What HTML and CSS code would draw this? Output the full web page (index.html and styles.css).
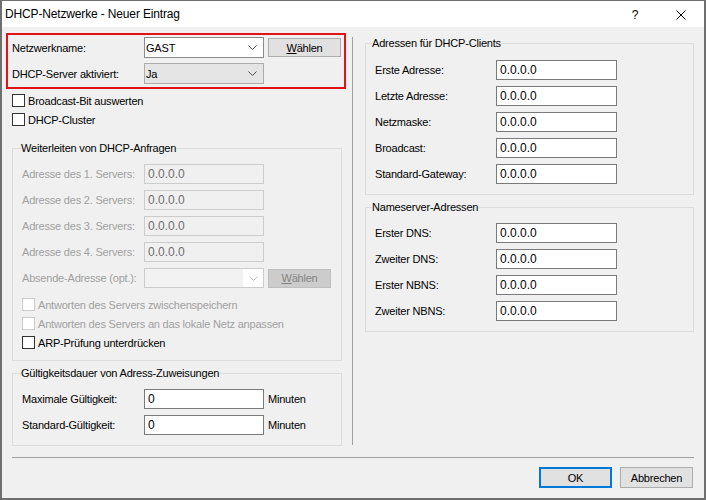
FILE: index.html
```html
<!DOCTYPE html>
<html lang="de">
<head>
<meta charset="utf-8">
<title>DHCP-Netzwerke - Neuer Eintrag</title>
<link rel="stylesheet" href="styles.css">
</head>
<body>
<div class="window">
  <div class="titlebar">
    <span class="title">DHCP-Netzwerke - Neuer Eintrag</span>
    <div class="caption-buttons">
      <span class="cap-btn help">?</span>
      <span class="cap-btn close"><svg width="10" height="10" viewBox="0 0 10 10"><path d="M0.5 0.5 L9.5 9.5 M9.5 0.5 L0.5 9.5" stroke="#000" stroke-width="1" fill="none"/></svg></span>
    </div>
  </div>
  <div class="client">
    <div class="main">
      <div class="col-left">
        <div class="highlight">
          <span class="lbl">Netzwerkname:</span>
          <div class="combo edit"><span class="val">GAST</span><svg class="chev" width="9" height="5" viewBox="0 0 9 5"><path d="M0.5 0.5 L4.5 4.5 L8.5 0.5" fill="none" stroke="currentColor"/></svg></div>
          <span class="btn"><u>W</u>ählen</span>
          <span class="lbl">DHCP-Server aktiviert:</span>
          <div class="combo list"><span class="val">Ja</span><svg class="chev" width="9" height="5" viewBox="0 0 9 5"><path d="M0.5 0.5 L4.5 4.5 L8.5 0.5" fill="none" stroke="currentColor"/></svg></div>
        </div>
        <div class="checks top-checks">
          <div class="check"><span class="box"></span>Broadcast-Bit auswerten</div>
          <div class="check"><span class="box"></span>DHCP-Cluster</div>
        </div>
        <fieldset class="group group-relay">
          <legend>Weiterleiten von DHCP-Anfragen</legend>
          <div class="form form-left">
            <span class="lbl dis">Adresse des 1. Servers:</span><span class="field dis">0.0.0.0</span>
            <span class="lbl dis">Adresse des 2. Servers:</span><span class="field dis">0.0.0.0</span>
            <span class="lbl dis">Adresse des 3. Servers:</span><span class="field dis">0.0.0.0</span>
            <span class="lbl dis">Adresse des 4. Servers:</span><span class="field dis">0.0.0.0</span>
            <span class="lbl dis">Absende-Adresse (opt.):</span>
            <div class="combo dis"><span class="combo-text"></span><span class="combo-arrow"><svg class="chev" width="9" height="5" viewBox="0 0 9 5"><path d="M0.5 0.5 L4.5 4.5 L8.5 0.5" fill="none" stroke="currentColor"/></svg></span></div>
            <span class="btn dis"><u>W</u>ählen</span>
          </div>
          <div class="checks">
            <div class="check dis"><span class="box"></span>Antworten des Servers zwischenspeichern</div>
            <div class="check dis"><span class="box"></span>Antworten des Servers an das lokale Netz anpassen</div>
            <div class="check"><span class="box"></span>ARP-Prüfung unterdrücken</div>
          </div>
        </fieldset>
        <fieldset class="group group-lease">
          <legend>Gültigkeitsdauer von Adress-Zuweisungen</legend>
          <div class="form form-left">
            <span class="lbl">Maximale Gültigkeit:</span><span class="field">0</span><span class="unit">Minuten</span>
            <span class="lbl">Standard-Gültigkeit:</span><span class="field">0</span><span class="unit">Minuten</span>
          </div>
        </fieldset>
      </div>
      <div class="vsep"></div>
      <div class="col-right">
        <fieldset class="group group-clients">
          <legend>Adressen für DHCP-Clients</legend>
          <div class="form form-right">
            <span class="lbl">Erste Adresse:</span><span class="field">0.0.0.0</span>
            <span class="lbl">Letzte Adresse:</span><span class="field">0.0.0.0</span>
            <span class="lbl">Netzmaske:</span><span class="field">0.0.0.0</span>
            <span class="lbl">Broadcast:</span><span class="field">0.0.0.0</span>
            <span class="lbl">Standard-Gateway:</span><span class="field">0.0.0.0</span>
          </div>
        </fieldset>
        <fieldset class="group group-ns">
          <legend>Nameserver-Adressen</legend>
          <div class="form form-right">
            <span class="lbl">Erster DNS:</span><span class="field">0.0.0.0</span>
            <span class="lbl">Zweiter DNS:</span><span class="field">0.0.0.0</span>
            <span class="lbl">Erster NBNS:</span><span class="field">0.0.0.0</span>
            <span class="lbl">Zweiter NBNS:</span><span class="field">0.0.0.0</span>
          </div>
        </fieldset>
      </div>
    </div>
    <div class="hsep"></div>
    <div class="footer">
      <span class="dlg-btn default">OK</span>
      <span class="dlg-btn">Abbrechen</span>
    </div>
  </div>
</div>
</body>
</html>
```
FILE: styles.css
```css
* { box-sizing: border-box; }
html, body { margin: 0; padding: 0; background: #ffffff; }
body {
  font-family: "Liberation Sans", Arial, sans-serif;
  font-size: 11px;
  letter-spacing: -0.2px;
  color: #000;
}
.window {
  width: 706px;
  height: 500px;
  border-style: solid;
  border-color: #6f6f6f;
  border-width: 1px 2px 2px 2px;
  background: #f0f0f0;
  display: flex;
  flex-direction: column;
  overflow: hidden;
}
.titlebar {
  height: 26px;
  flex: none;
  background: #fff;
  display: flex;
  align-items: center;
}
.title {
  padding-left: 3px;
  font-size: 12px;
  letter-spacing: -0.15px;
}
.caption-buttons { margin-left: auto; display: flex; height: 100%; }
.cap-btn {
  width: 46px;
  height: 100%;
  display: flex;
  align-items: center;
  justify-content: center;
}
.help { font-size: 12px; letter-spacing: 0; padding-top: 1px; }
.close { padding-top: 1px; }

.client { flex: 1; display: flex; flex-direction: column; }
.main { display: flex; padding: 6px 0 0 4px; }
.col-left { width: 340px; flex: none; }
.vsep { width: 1px; flex: none; background: #a0a0a0; margin: 4px 12px 1px 6px; }
.col-right { width: 329px; flex: none; padding-top: 4px; }

.lbl { grid-column: 1; white-space: nowrap; }
.lbl.dis { color: #a0a0a0; }

.highlight {
  border: 2px solid #e3131c;
  padding: 2px 3px 3px 4px;
  display: grid;
  grid-template-columns: 128px 120px 73px;
  column-gap: 4px;
  row-gap: 5px;
  grid-auto-rows: 21px;
  align-items: center;
}

.combo {
  height: 21px;
  display: flex;
  align-items: center;
  padding-left: 1px;
  border: 1px solid #a6a6a6;
  color: #000;
}
.combo .chev { margin-left: auto; margin-right: 6px; color: #505050; }
.combo.edit { background: #fff; border-color: #8c8c8c; }
.combo.list { background: #e5e5e5; border-color: #acacac; }
.combo.dis { height: 20px; padding: 0; border-color: #cccccc; background: #fff; width: 120px; }
.combo-text { flex: 1; height: 100%; background: #f2f2f2; }
.combo-arrow { width: 20px; height: 100%; display: flex; align-items: center; justify-content: center; background: #fff; }
.combo-arrow .chev { margin: 0; color: #c4c4c4; }

.btn {
  height: 19px;
  border: 1px solid #adadad;
  background: #e1e1e1;
  display: flex;
  align-items: center;
  justify-content: center;
}
.btn.dis { width: 63px; background: #cccccc; border-color: #bfbfbf; color: #838383; }

.checks { display: flex; flex-direction: column; }
.top-checks { margin-top: 2px; padding-left: 6px; }
.check { height: 19px; display: flex; align-items: center; white-space: nowrap; }
.box {
  width: 13px;
  height: 13px;
  flex: none;
  border: 1px solid #333;
  background: #fff;
  margin-right: 3px;
}
.check.dis { color: #a0a0a0; }
.check.dis .box { border-color: #cccccc; }

.group {
  margin: 0;
  min-width: 0;
  border: 1px solid #dcdcdc;
  padding: 9px 9px 10px 9px;
}
.group legend { padding: 0; line-height: 13px; margin-left: -1px; }
.col-left .group { margin-left: 6px; width: 330px; }
.col-right .group legend { margin-left: -3px; }
.group-relay { margin-top: 13px; }
.group-relay .checks { margin-top: 7px; }
.group-relay { padding-bottom: 8px; }
.group-lease { margin-top: 6px; }
.group-clients { padding-top: 10px; }
.group-ns { margin-top: 6px; }

.form {
  display: grid;
  column-gap: 4px;
  row-gap: 6px;
  grid-auto-rows: 20px;
  align-items: center;
  justify-items: start;
}
.form-left { grid-template-columns: 118px 120px auto; }
.form-right { grid-template-columns: 117px 121px; }

.field {
  width: 100%;
  height: 20px;
  border: 1px solid #7a7a7a;
  background: #fff;
  padding-left: 3px;
  display: flex;
  align-items: center;
  font-size: 12px;
  letter-spacing: 0;
}
.field.dis { background: #f0f0f0; border-color: #cccccc; color: #6d6d6d; }
.unit { white-space: nowrap; }

.hsep { height: 1px; flex: none; background: #a0a0a0; margin: 11px 10px 0 10px; }
.footer {
  display: flex;
  justify-content: flex-end;
  gap: 8px;
  padding: 9px 11px 0 0;
}
.dlg-btn {
  width: 73px;
  height: 21px;
  border: 1px solid #adadad;
  background: #e1e1e1;
  display: flex;
  align-items: center;
  justify-content: center;
}
.dlg-btn.default { border: 2px solid #0078d7; }
```
